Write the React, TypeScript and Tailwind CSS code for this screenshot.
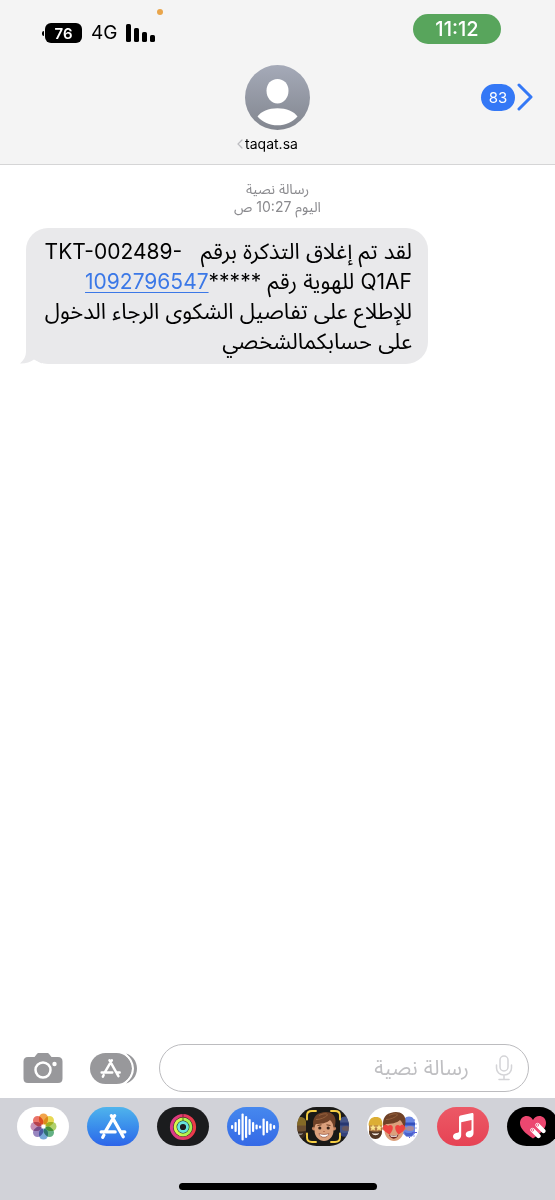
import type { ReactNode } from "react";

function StatusBar() {
  return (
    <div className="flex h-[58px] items-start justify-between pl-[42px] pr-[54px]">
      <div className="relative flex items-center gap-[9px] pt-[21px]">
        <div className="flex items-center gap-px">
          <span className="h-[5px] w-[2px] rounded-l-full bg-black" />
          <span className="flex h-5 w-[37px] items-center justify-center rounded-[6px] bg-black text-[15px] font-semibold leading-none text-white">
            76
          </span>
        </div>
        <span className="text-[19px] leading-6">4G</span>
        <svg className="h-[18px] w-[29px]" viewBox="0 0 29 18" aria-hidden="true">
          <rect x="0" y="0" width="5" height="18" rx="1.6" />
          <rect x="8" y="4" width="5" height="14" rx="1.6" />
          <rect x="16" y="8" width="5" height="10" rx="1.6" />
          <rect x="24" y="11" width="5" height="7" rx="1.6" />
        </svg>
        <span className="absolute -right-2 top-[9px] size-[6px] rounded-full bg-[#e9a54b]" />
      </div>
      <div className="mt-[14px] flex h-[30px] w-[88px] items-center justify-center rounded-full bg-[#58a55c] text-[20px] font-medium leading-none text-white">
        11:12
      </div>
    </div>
  );
}

function Header() {
  return (
    <header className="border-b border-[#d5d5d6] bg-[#f4f4f4]">
      <StatusBar />
      <div className="grid h-[106px] grid-cols-[1fr_auto_1fr] items-start px-[22px] pt-[7px]">
        <span />
        <div className="flex flex-col items-center">
          <svg className="size-[65px]" viewBox="0 0 65 65" role="img" aria-label="taqat.sa">
            <defs>
              <linearGradient id="avatar" x1="0" y1="0" x2="0" y2="1">
                <stop offset="0" stopColor="#a5aab8" />
                <stop offset="1" stopColor="#82868f" />
              </linearGradient>
            </defs>
            <circle cx="32.5" cy="32.5" r="32.5" fill="url(#avatar)" />
            <path d="M32.500 14c6.500 0 11 5 11 11.800 0 7-4.700 12.700-11 12.700s-11-5.700-11-12.700C21.500 19 26 14 32.500 14z" fill="#fff" />
            <path d="M12.500 51.500C16 46.500 23.500 43.300 32.500 43.300S49 46.500 52.500 51.500C47.500 57 40.500 60.300 32.500 60.300S17.500 57 12.500 51.500z" fill="#fff" />
          </svg>
          <button className="mr-5 mt-1 flex items-center gap-[2px] text-[14px] leading-5">
            <svg className="h-[10px] w-[6px]" viewBox="0 0 6 10" fill="none" stroke="#bcbcc0" strokeWidth="1.2" strokeLinecap="round" aria-hidden="true">
              <path d="M5 1 1 5l4 4" />
            </svg>
            taqat.sa
          </button>
        </div>
        <button className="mt-[18px] flex items-center gap-[2px] justify-self-end" aria-label="83">
          <span className="flex h-[27px] w-[34px] items-center justify-center rounded-full bg-[#3478f6] text-[15px] leading-none text-white">
            83
          </span>
          <svg className="h-[28px] w-[16px]" viewBox="0 0 16 28" fill="none" stroke="#3478f6" strokeWidth="3" strokeLinecap="round" strokeLinejoin="round" aria-hidden="true">
            <path d="M2 2l12 12L2 26" />
          </svg>
        </button>
      </div>
    </header>
  );
}

function Conversation() {
  return (
    <main className="flex-1 pt-[15px]">
      <div dir="rtl" className="text-center text-[14px] leading-[18px] text-[#8a8a8e]">
        <p>رسالة نصية</p>
        <p>اليوم 10:27 ص</p>
      </div>
      <div className="relative ml-[26px] mt-3 w-fit">
        <svg className="absolute -left-[6px] bottom-0 h-[30px] w-[30px]" viewBox="0 0 30 30" fill="#e9e9eb" aria-hidden="true">
          <path d="M6 0v18c0 4-2 8-6 11.500 5 .3 10-1 14-4l8 4V0z" />
        </svg>
        <p
          dir="rtl"
          className="relative min-w-[402px] whitespace-nowrap rounded-[22px] bg-[#e9e9eb] px-4 py-2 text-[22px] leading-[30px]"
        >
          لقد تم إغلاق التذكرة برقم &nbsp; <bdi dir="ltr" className="text-[21px] leading-5">TKT-002489-</bdi>
          <br />
          <bdi className="text-[21px] leading-5">Q1AF</bdi> للهوية رقم <span className="text-[21px] leading-5">*****</span>
          <a href="tel:1092796547" className="text-[21px] leading-5 text-[#3b78e7] underline decoration-1 underline-offset-[3px]">
            1092796547
          </a>
          <br />
          للإطلاع على تفاصيل الشكوى الرجاء الدخول
          <br />
          على حسابكمالشخصي
        </p>
      </div>
    </main>
  );
}

function StoreMark() {
  return (
    <g fill="none" stroke="#fff" strokeLinecap="round">
      <path d="M11.500 1.500 20 16.500l2.500 4.500M14.500 1.500 6 16M2 16.500h13M20 16.500h4M4.500 19.500l-1 2" strokeWidth="3" />
    </g>
  );
}

function Composer() {
  return (
    <form className="flex items-center pb-[6px] pl-[23px] pr-[26px]">
      <button type="button" aria-label="الكاميرا">
        <svg className="h-[31px] w-[40px]" viewBox="0 0 40 31" aria-hidden="true">
          <path d="M5 4h6.500l2-2.600C14.300.4 15 0 16 0h8c1 0 1.700.4 2.500 1.400l2 2.600H35c3 0 4.500 1.500 4.500 4.500v17c0 3-1.500 4.500-4.500 4.500H5C2 30 .5 28.500.5 25.500v-17C.5 5.500 2 4 5 4z" fill="#98989b" />
          <circle cx="20" cy="17" r="7.500" fill="none" stroke="#fff" strokeWidth="2.500" />
          <circle cx="31.500" cy="11" r="2.200" fill="#fff" />
        </svg>
      </button>
      <button type="button" className="ml-[27px]" aria-label="التطبيقات">
        <svg className="h-[31px] w-[48px]" viewBox="0 0 48 31" aria-hidden="true">
          <path d="M36 .5c6 1.500 11 7.500 11 15s-5 13.500-11 15c4-4 6.500-9 6.500-15S40 4.500 36 .5z" fill="#98989b" />
          <rect x="0" y="0" width="42" height="31" rx="15.500" fill="#98989b" />
          <path d="M35 1c5 4 8 9 8 14.500S40 26 35 30" fill="none" stroke="#fff" strokeWidth="2" />
          <g transform="translate(10 6) scale(.82)">
            <StoreMark />
          </g>
        </svg>
      </button>
      <label dir="rtl" className="ml-[21px] flex h-12 min-w-0 flex-1 items-center gap-[26px] rounded-full border border-[#bcbcbf] pl-5 pr-[15px]">
        <svg className="h-[26px] w-[18px] shrink-0" viewBox="0 0 18 26" fill="none" stroke="#d4d4d7" strokeWidth="1.500" strokeLinecap="round" aria-hidden="true">
          <rect x="5" y="1" width="8" height="15" rx="4" />
          <path d="M1.500 10v3c0 4 3 7 7.500 7s7.500-3 7.500-7v-3M9 20v4M4 24.500h10" />
        </svg>
        <input
          type="text"
          aria-label="رسالة نصية"
          placeholder="رسالة نصية"
          className="min-w-0 flex-1 bg-transparent text-[21px] leading-[30px] outline-none placeholder:text-[#bfbfc2]"
        />
      </label>
    </form>
  );
}

const petals: [number, string][] = [
  [0, "#f19a37"],
  [45, "#e6d441"],
  [90, "#a6cb5a"],
  [135, "#54a978"],
  [180, "#6aa0d5"],
  [225, "#8d79b9"],
  [270, "#c184ad"],
  [315, "#e7655a"],
];

function PhotosIcon() {
  return (
    <svg className="size-[27px]" viewBox="-13.5 -13.5 27 27" aria-hidden="true">
      {petals.map(([angle, color]) => (
        <rect key={angle} x="-4.500" y="-13" width="9" height="11" rx="4.500" fill={color} fillOpacity="0.9" transform={`rotate(${angle})`} className="mix-blend-multiply" />
      ))}
      <circle r="1" fill="#fff" />
    </svg>
  );
}

function StoreIcon() {
  return (
    <svg className="h-[25px] w-[28px]" viewBox="0 0 26 23" aria-hidden="true">
      <StoreMark />
    </svg>
  );
}

function RingsIcon() {
  return (
    <svg className="size-[28px]" viewBox="0 0 28 28" fill="none" aria-hidden="true">
      <defs>
        <linearGradient id="move">
          <stop offset="0" stopColor="#d93a8c" />
          <stop offset="1" stopColor="#ec3b45" />
        </linearGradient>
        <linearGradient id="exercise">
          <stop offset="0" stopColor="#dcf64a" />
          <stop offset="1" stopColor="#9ef052" />
        </linearGradient>
      </defs>
      <circle cx="14" cy="14" r="11.500" stroke="url(#move)" strokeWidth="3.200" />
      <circle cx="14" cy="14" r="7.900" stroke="url(#exercise)" strokeWidth="3" />
      <circle cx="14" cy="14" r="4.500" stroke="#67e4dc" strokeWidth="2.800" />
      <path d="M14 1v3.500" stroke="#7a1d35" strokeWidth="1" />
      <path d="M14 5v3" stroke="#53751e" strokeWidth="1" />
    </svg>
  );
}

const levels = [4, 10, 16, 27, 22, 16, 10, 5, 3, 17, 12, 7, 4];

function WaveIcon() {
  return (
    <svg className="h-[28px] w-[46px]" viewBox="0 0 46 28" fill="#fff" aria-hidden="true">
      {levels.map((level, i) => (
        <rect key={i} x={1 + i * 3.5} y={14 - level / 2} width="2.2" height={level} rx="1" />
      ))}
    </svg>
  );
}

function BuilderHead() {
  return (
    <g>
      <path d="M2 17h13v7c0 4-3 7-6.500 7S2 28 2 24z" fill="#b07a45" />
      <path d="M1.500 18c0-6 3-8.500 7.500-8.500s6.500 2.500 6.500 8.500z" fill="#dcae34" />
      <path d="M2 23c1 .8 3 1 6.500 1s5.500-.2 6.500-1c0 5-2.500 8.500-6.500 8.500S2 28 2 23z" fill="#523725" />
      <path d="M5 25.500c2 .8 5 .8 7 0-.5 3-6.500 3-7 0z" fill="#f6ece4" />
    </g>
  );
}

function WizardHead() {
  return (
    <g>
      <path d="M36 17c0-5 2-8 6-8s6 3 6 8v9c-3 4-9 4-12 0z" fill="#6a86e2" />
      <path d="M35 15h13v3H35z" fill="#3450bd" />
      <ellipse cx="43" cy="21" rx="4" ry="2.500" fill="#a88a9c" />
      <path d="M37 24c3 2 7 2 10 0l-2 5h-6z" fill="#4a62cc" />
    </g>
  );
}

function BoyHead() {
  return (
    <g>
      <circle cx="17" cy="21" r="2" fill="#c98560" />
      <circle cx="37" cy="21" r="2" fill="#c98560" />
      <path d="M17.500 15c0-4 4-7 9.500-7s9.500 3 9.500 7v8c0 6-4.500 10.500-9.500 10.500S17.500 29 17.500 23z" fill="#dba07c" />
      <path d="M17 21c-2.500-7 0-14 6.500-15.500C31 2.500 38.500 6 38.500 13c0 3-.5 6-1.500 8-.5-4-2-6.500-4-8.500-3 3-9 4-14 4-1 1.500-1.500 2.500-2 4.500z" fill="#6f4127" />
      <path d="M19 12c4 0 9-1.500 12-5M22 8c3-1.500 5-2 8-1.500" fill="none" stroke="#94603c" strokeWidth="1" />
    </g>
  );
}

function MemojiIcon() {
  return (
    <svg className="h-full w-full" viewBox="0 0 52 38" aria-hidden="true">
      <g opacity=".55">
        <g transform="translate(-6 0)"><BuilderHead /></g>
        <g transform="translate(6 0)"><WizardHead /></g>
      </g>
      <rect x="9" y="3" width="34" height="32" fill="#1a1917" />
      <BoyHead />
      <circle cx="22.800" cy="20.500" r="1.600" fill="#3a2318" />
      <circle cx="31.200" cy="20.500" r="1.600" fill="#3a2318" />
      <path d="M20.500 18l4-.7M29.500 17.300l4 .7" stroke="#6a3a20" strokeWidth="1" />
      <path d="M26 24h2" stroke="#b87354" strokeWidth="1" />
      <path d="M22 26c3 1.300 7 1.300 10 0-1 5-9 5-10 0z" fill="#fff" stroke="#8a4435" strokeWidth=".6" />
      <path d="M10 12V8c0-3 2-4.500 5-4.500h4M34 3.500h4c3 0 5 1.500 5 4.500v4M43 26v4c0 3-2 4.500-5 4.500h-4M19 34.500h-4c-3 0-5-1.500-5-4.500v-4" fill="none" stroke="#f6cf45" strokeWidth="1.900" strokeLinecap="round" />
    </svg>
  );
}

function StickersIcon() {
  return (
    <svg className="h-full w-full" viewBox="0 0 52 38" aria-hidden="true">
      <BuilderHead />
      <path d="M6 17l1 2 2.200.2-1.600 1.600.4 2.200-2-1-2 1 .4-2.200-1.600-1.600L5 19zM12 17l1 2 2.200.2-1.600 1.600.4 2.200-2-1-2 1 .4-2.200-1.600-1.600L11 19z" fill="#fbe58a" />
      <WizardHead />
      <path d="M45 25h5M47 28v1M49 20v1M47.500 12v1M49 16v1M42 30h1" stroke="#5a5fd8" strokeWidth="1.200" />
      <BoyHead />
      <path d="M22 27c3 1.300 7 1.300 9.500 0-1 5.500-8.500 5.500-9.500 0z" fill="#6b241f" />
      <path d="M23 27.700c2 .6 5.500.6 7.500 0l-1 1.500h-5.500z" fill="#fff" />
      <path d="M22.500 27c-4.500-2.500-7-5-6.300-8 .8-2.300 3.600-2.300 4.800-.5 1.600-1.800 4.500-1.200 4.800 1.300.2 2.700-1.300 5-3.300 7.200zM31.500 27c-2-2.200-3.500-4.500-3.300-7.200.3-2.500 3.200-3.100 4.800-1.300 1.200-1.800 4-1.800 4.800.5.700 3-1.800 5.500-6.300 8z" fill="#ee4440" />
    </svg>
  );
}

function MusicIcon() {
  return (
    <svg className="h-[27px] w-[23px]" viewBox="0 0 23 27" fill="#fff" aria-hidden="true">
      <path d="M7 4.500c0-1 .6-1.700 1.600-2L20 0c1-.2 1.500.3 1.500 1.200v19c0 2.500-1.800 4.300-4.300 4.300-2 0-3.500-1.200-3.500-3s1.300-3 3.300-3.500l1.300-.3c.8-.2 1.200-.6 1.200-1.500V7L9.200 9.200v13c0 2.600-1.800 4.500-4.500 4.500-2.200 0-3.700-1.200-3.700-3.100 0-1.800 1.300-3 3.300-3.500l1.400-.3C6.600 19.600 7 19.100 7 18.300z" />
    </svg>
  );
}

function TouchIcon() {
  return (
    <svg className="h-[24px] w-[28px]" viewBox="0 0 28 24" aria-hidden="true">
      <path d="M14 23.500C6 18 1 13.500 1 8c0-8 10-9.500 13-3 3-6.500 13-5 13 3 0 5.500-5 10-13 15.500z" fill="#ec4770" />
      <g stroke="#fff" strokeWidth="4.400" strokeLinecap="round">
        <path d="M18.500 10l6 6" />
        <path d="M13.500 15l6 6" />
      </g>
      <g fill="none" stroke="#ec4770" strokeWidth=".8">
        <circle cx="18.500" cy="10" r="1.200" />
        <circle cx="13.500" cy="15" r="1.200" />
      </g>
    </svg>
  );
}

const apps: { label: string; style: string; icon: ReactNode }[] = [
  { label: "الصور", style: "bg-white", icon: <PhotosIcon /> },
  { label: "المتجر", style: "bg-linear-to-b from-[#50b4ec] to-[#2e64e9]", icon: <StoreIcon /> },
  { label: "النشاط", style: "bg-[#1b1c1e]", icon: <RingsIcon /> },
  { label: "رسالة صوتية", style: "bg-linear-to-b from-[#4688ee] to-[#3569e6]", icon: <WaveIcon /> },
  { label: "ميموجي", style: "bg-[#1a1917]", icon: <MemojiIcon /> },
  { label: "ملصقات", style: "bg-white", icon: <StickersIcon /> },
  { label: "الموسيقى", style: "bg-linear-to-b from-[#ec5966] to-[#e64254]", icon: <MusicIcon /> },
  { label: "اللمس", style: "bg-black", icon: <TouchIcon /> },
];

function AppDrawer() {
  return (
    <footer className="flex h-[102px] flex-col justify-between bg-[#d1d2d8] pb-[10px] pt-[9px]">
      <nav className="flex gap-[18px] overflow-hidden pl-[17px]">
        {apps.map((app) => (
          <button
            key={app.label}
            aria-label={app.label}
            className={`flex h-[39px] w-[52px] shrink-0 items-center justify-center overflow-hidden rounded-full ${app.style}`}
          >
            {app.icon}
          </button>
        ))}
      </nav>
      <div className="h-[7px] w-[198px] self-center rounded-full bg-black" />
    </footer>
  );
}

export default function App() {
  return (
    <div className="flex min-h-screen flex-col bg-white font-[Inter,'Noto_Sans_Arabic','DejaVu_Sans',sans-serif] text-black">
      <Header />
      <Conversation />
      <Composer />
      <AppDrawer />
    </div>
  );
}
